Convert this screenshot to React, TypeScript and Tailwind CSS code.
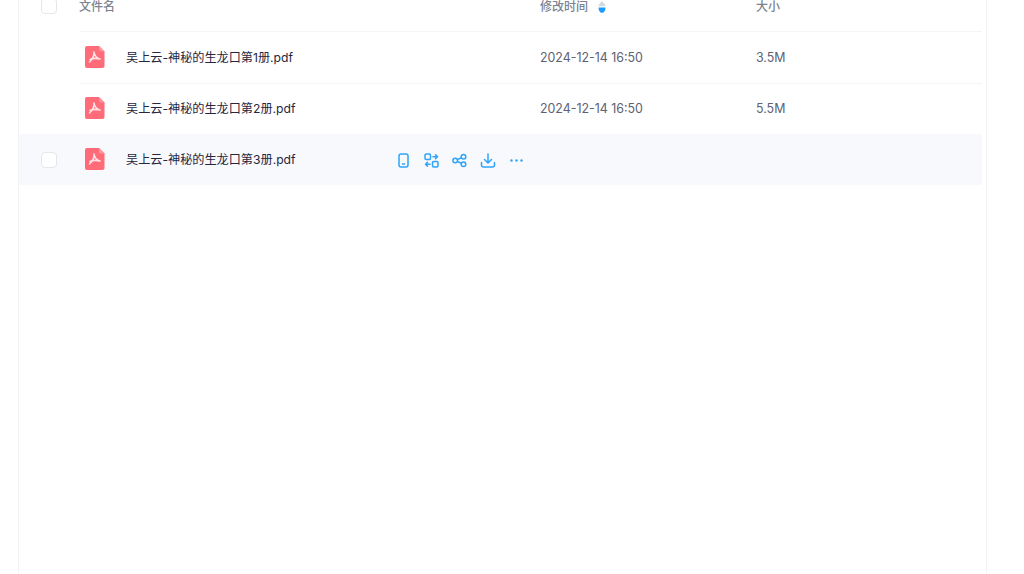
const font = { fontFamily: '"Inter", "Noto Sans CJK SC", sans-serif' };

function Pdf() {
  return (
    <svg width="20" height="22" viewBox="0 0 20 22" className="block mb-[2px]">
      <path d="M2 0H14L19.500 5.500V20a2 2 0 0 1-2 2H2a2 2 0 0 1-2-2V2a2 2 0 0 1 2-2Z" fill="#ff6b78" />
      <path d="M14 0L19.500 5.500H15.500a1.500 1.500 0 0 1-1.500-1.500Z" fill="#ff939c" />
      <path d="M9 6c.5 3.500 2.200 5.800 6 7M9.200 6.500C9 10 7.500 13.500 4.500 16M5 13.500c3-1.300 6-1.600 10-.5" fill="none" stroke="#ffe3e6" strokeWidth="1.600" strokeLinecap="round" strokeLinejoin="round" />
    </svg>
  );
}

function Check() {
  return <div className="w-4 h-4 rounded-[4px] border border-[#e4e6ec] bg-white" />;
}

function Row({ n, time, size, hover, top }: { n: number; time?: string; size?: string; hover?: boolean; top?: boolean }) {
  return (
    <div className={`h-[51px] flex items-center w-[963px] ${hover ? "bg-[#f7f9fd]" : ""}`}>
      <div className="w-[60px] pl-[22px] shrink-0">{hover && <Check />}</div>
      <div className={`flex-1 h-full flex items-center border-t ${top ? "border-[#f5f5f7]" : "border-transparent"}`}>
        <div className="w-[461px] flex items-center shrink-0 pl-[6px]">
          <Pdf />
          <span className="ml-[21px] text-[12.15px] text-[#26263e] whitespace-nowrap w-[270px]">吴上云-神秘的生龙口第{n}册.pdf</span>
          {hover && (
            <div className="flex items-center gap-[13px] text-[#2fa4f8]">
              <svg width="15" height="15" viewBox="0 0 15 15" fill="none" stroke="currentColor" strokeWidth="1.500" strokeLinecap="round"><rect x="3" y="1" width="9" height="13" rx="2" /><path d="M6.500 11h2" /></svg>
              <svg width="15" height="15" viewBox="0 0 15 15" fill="none" stroke="currentColor" strokeWidth="1.500" strokeLinecap="round" strokeLinejoin="round"><rect x="1" y="1" width="5.500" height="5.500" rx="1.200" /><rect x="8.500" y="8.500" width="5.500" height="5.500" rx="1.200" /><path d="M9 3.700h4.500L11.500 1.700M13.500 3.700l-2 2M6 11.300H1.500l2-2M1.500 11.300l2 2" /></svg>
              <svg width="15" height="15" viewBox="0 0 15 15" fill="none" stroke="currentColor" strokeWidth="1.500"><circle cx="3.200" cy="7.500" r="2.300" /><circle cx="11.500" cy="3.800" r="2.300" /><circle cx="11.500" cy="11.200" r="2.300" /><path d="M5.300 6.600l4-1.900M5.300 8.400l4 1.900" /></svg>
              <svg width="16" height="15" viewBox="0 0 16 15" fill="none" stroke="currentColor" strokeWidth="1.500" strokeLinecap="round" strokeLinejoin="round"><path d="M8 1v9M4.500 6.500L8 10l3.500-3.500M1.500 9.500v2.500a2 2 0 0 0 2 2h9a2 2 0 0 0 2-2V9.500" /></svg>
              <svg width="15" height="15" viewBox="0 0 15 15" fill="currentColor"><circle cx="2.500" cy="7.500" r="1.200" /><circle cx="7.500" cy="7.500" r="1.200" /><circle cx="12.500" cy="7.500" r="1.200" /></svg>
            </div>
          )}
        </div>
        <div className="w-[216px] shrink-0 text-[12.4px] text-[#5d6272]">{time}</div>
        <div className="text-[12.4px] text-[#5d6272]">{size}</div>
      </div>
    </div>
  );
}

export default function App() {
  return (
    <div className="h-[574px] overflow-hidden bg-white" style={font}>
      <div className="ml-[18px] w-[969px] h-[594px] -mt-[20px] border-x border-[#f3f3f5]">
        <div className="h-[52px] flex items-center w-[963px]">
          <div className="w-[60px] pl-[22px] shrink-0"><Check /></div>
          <div className="flex-1 h-full flex items-center border-b border-[#f5f5f7] text-[12px] font-medium text-[#7d8290]">
            <div className="w-[461px] shrink-0 pt-[2px]">文件名</div>
            <div className="w-[216px] shrink-0 flex items-center pt-[2px]">
              <span>修改时间</span>
              <svg width="8" height="12" viewBox="0 0 8 12" className="ml-[10px]">
                <path d="M4 0C5 1.500 7.500 3 7.500 5.200H0.500C0.500 3 3 1.500 4 0Z" fill="#d5d8de" />
                <path d="M0.500 6.500H7.500C7.500 9.500 6 11.800 4 11.800S0.500 9.500 0.500 6.500Z" fill="#1e9bff" />
              </svg>
            </div>
            <div className="pt-[2px]">大小</div>
          </div>
        </div>
        <Row n={1} time="2024-12-14 16:50" size="3.5M" />
        <Row n={2} time="2024-12-14 16:50" size="5.5M" top />
        <Row n={3} hover />
      </div>
    </div>
  );
}
